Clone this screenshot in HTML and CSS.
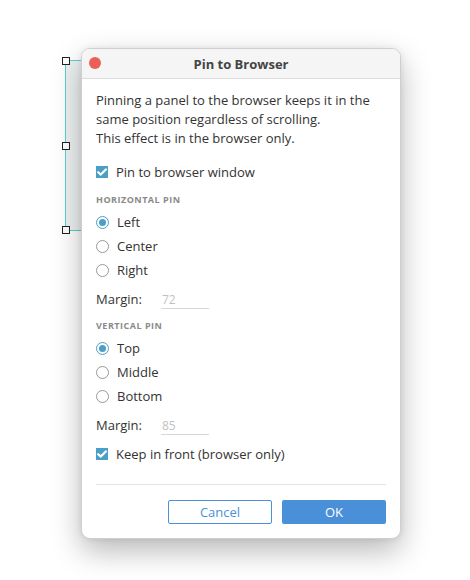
FILE: index.html
```html
<!DOCTYPE html>
<html>
<head>
<meta charset="utf-8">
<link rel="stylesheet" href="styles.css">
</head>
<body>
<div class="stage">
  <div class="selection">
    <span class="handle h-top"></span>
    <span class="handle h-mid"></span>
    <span class="handle h-bot"></span>
  </div>
  <div class="dialog">
    <div class="titlebar">
      <span class="close"></span>
      <span class="title">Pin to Browser</span>
    </div>
    <div class="body">
      <p class="intro">Pinning a panel to the browser keeps it in the same position regardless of scrolling.<br>This effect is in the browser only.</p>
      <div class="check row-check1"><span class="box"><svg width="10" height="8" viewBox="0 0 10 8"><path d="M1.2 4.2 L3.8 6.6 L8.8 1.4" fill="none" stroke="#fff" stroke-width="2.2" stroke-linecap="round" stroke-linejoin="round"/></svg></span>Pin to browser window</div>
      <div class="section">HORIZONTAL PIN</div>
      <div class="radio"><span class="circle on"></span>Left</div>
      <div class="radio"><span class="circle"></span>Center</div>
      <div class="radio"><span class="circle"></span>Right</div>
      <div class="margin"><span class="mlabel">Margin:</span><span class="field">72</span></div>
      <div class="section">VERTICAL PIN</div>
      <div class="radio"><span class="circle on"></span>Top</div>
      <div class="radio"><span class="circle"></span>Middle</div>
      <div class="radio"><span class="circle"></span>Bottom</div>
      <div class="margin"><span class="mlabel">Margin:</span><span class="field">85</span></div>
      <div class="check row-check2"><span class="box"><svg width="10" height="8" viewBox="0 0 10 8"><path d="M1.2 4.2 L3.8 6.6 L8.8 1.4" fill="none" stroke="#fff" stroke-width="2.2" stroke-linecap="round" stroke-linejoin="round"/></svg></span>Keep in front (browser only)</div>
      <div class="divider"></div>
      <div class="buttons">
        <span class="btn cancel">Cancel</span>
        <span class="btn ok">OK</span>
      </div>
    </div>
  </div>
</div>
</body>
</html>
```
FILE: styles.css
```css
html, body {
  margin: 0;
  padding: 0;
  background: #ffffff;
}
body {
  font-family: "Open Sans", Lato, sans-serif;
  color: #333;
}
.stage {
  position: relative;
  width: 470px;
  height: 580px;
  overflow: hidden;
  padding-top: 48px;
  box-sizing: border-box;
}
.selection {
  position: absolute;
  left: 65px;
  top: 60px;
  width: 60px;
  height: 169px;
  border: 1px solid #5ccfcf;
  background: #eef1f2;
}
.handle {
  position: absolute;
  width: 6px;
  height: 6px;
  background: #fff;
  border: 1px solid #222;
  left: -4px;
}
.h-top { top: -4px; }
.h-mid { top: 81px; }
.h-bot { top: 165px; }

.dialog {
  position: relative;
  margin-left: 81px;
  width: 320px;
  height: 491px;
  box-sizing: border-box;
  background: #fff;
  border: 1px solid #cfcfcf;
  border-radius: 9px;
  box-shadow: 0 12px 30px rgba(0,0,0,0.28), 0 0 6px rgba(0,0,0,0.08);
  overflow: hidden;
}
.titlebar {
  height: 29px;
  background: #f5f5f5;
  border-bottom: 1px solid #dcdcdc;
  display: flex;
  align-items: center;
  justify-content: center;
  position: relative;
}
.close {
  position: absolute;
  left: 7px;
  top: 8px;
  width: 12px;
  height: 12px;
  border-radius: 50%;
  background: #ec5f57;
}
.title {
  font-weight: 700;
  font-size: 13px;
  color: #444;
}
.body {
  padding: 12px 14px 0 14px;
}
.intro {
  margin: 0;
  font-size: 13px;
  line-height: 19px;
  color: #333;
}
.check {
  display: flex;
  align-items: center;
  font-size: 13px;
  height: 20px;
}
.row-check1 { margin-top: 14px; }
.row-check2 { margin-top: 8px; }
.box {
  width: 12px;
  height: 12px;
  background: #4b9ec6;
  margin-right: 8px;
  display: flex;
  align-items: center;
  justify-content: center;
}
.section {
  font-size: 9px;
  font-weight: 700;
  color: #8a8a8a;
  letter-spacing: 0.5px;
  margin-top: 11px;
  height: 14px;
  line-height: 14px;
}
.radio {
  display: flex;
  align-items: center;
  font-size: 13px;
  height: 24px;
}
.section + .radio { margin-top: 3px; }
.circle {
  width: 11px;
  height: 11px;
  border: 1px solid #999;
  border-radius: 50%;
  margin-right: 8px;
  box-sizing: content-box;
  position: relative;
}
.circle.on {
  border-color: #4b9ec6;
}
.circle.on::after {
  content: "";
  position: absolute;
  left: 2px;
  top: 2px;
  width: 7px;
  height: 7px;
  border-radius: 50%;
  background: #4b9ec6;
}
.margin {
  display: flex;
  align-items: center;
  font-size: 13px;
  height: 22px;
  margin-top: 6px;
  margin-bottom: 4px;
}
.margin + .section { margin-top: 9px; }
.mlabel {
  width: 65px;
}
.field {
  width: 47px;
  padding-left: 1px;
  border-bottom: 1px solid #d8d8d8;
  color: #c2c2c2;
  font-size: 12px;
  line-height: 16px;
  margin-top: 2px;
}
.divider {
  height: 1px;
  background: #e2e2e2;
  margin-top: 20px;
}
.buttons {
  display: flex;
  justify-content: flex-end;
  gap: 10px;
  margin-top: 15px;
}
.btn {
  width: 104px;
  height: 24px;
  box-sizing: border-box;
  border-radius: 2px;
  display: flex;
  align-items: center;
  justify-content: center;
  font-size: 13px;
}
.cancel {
  border: 1px solid #4a90d9;
  color: #4a90d9;
  background: #fff;
}
.ok {
  background: #4a90d9;
  color: #fff;
}
```
